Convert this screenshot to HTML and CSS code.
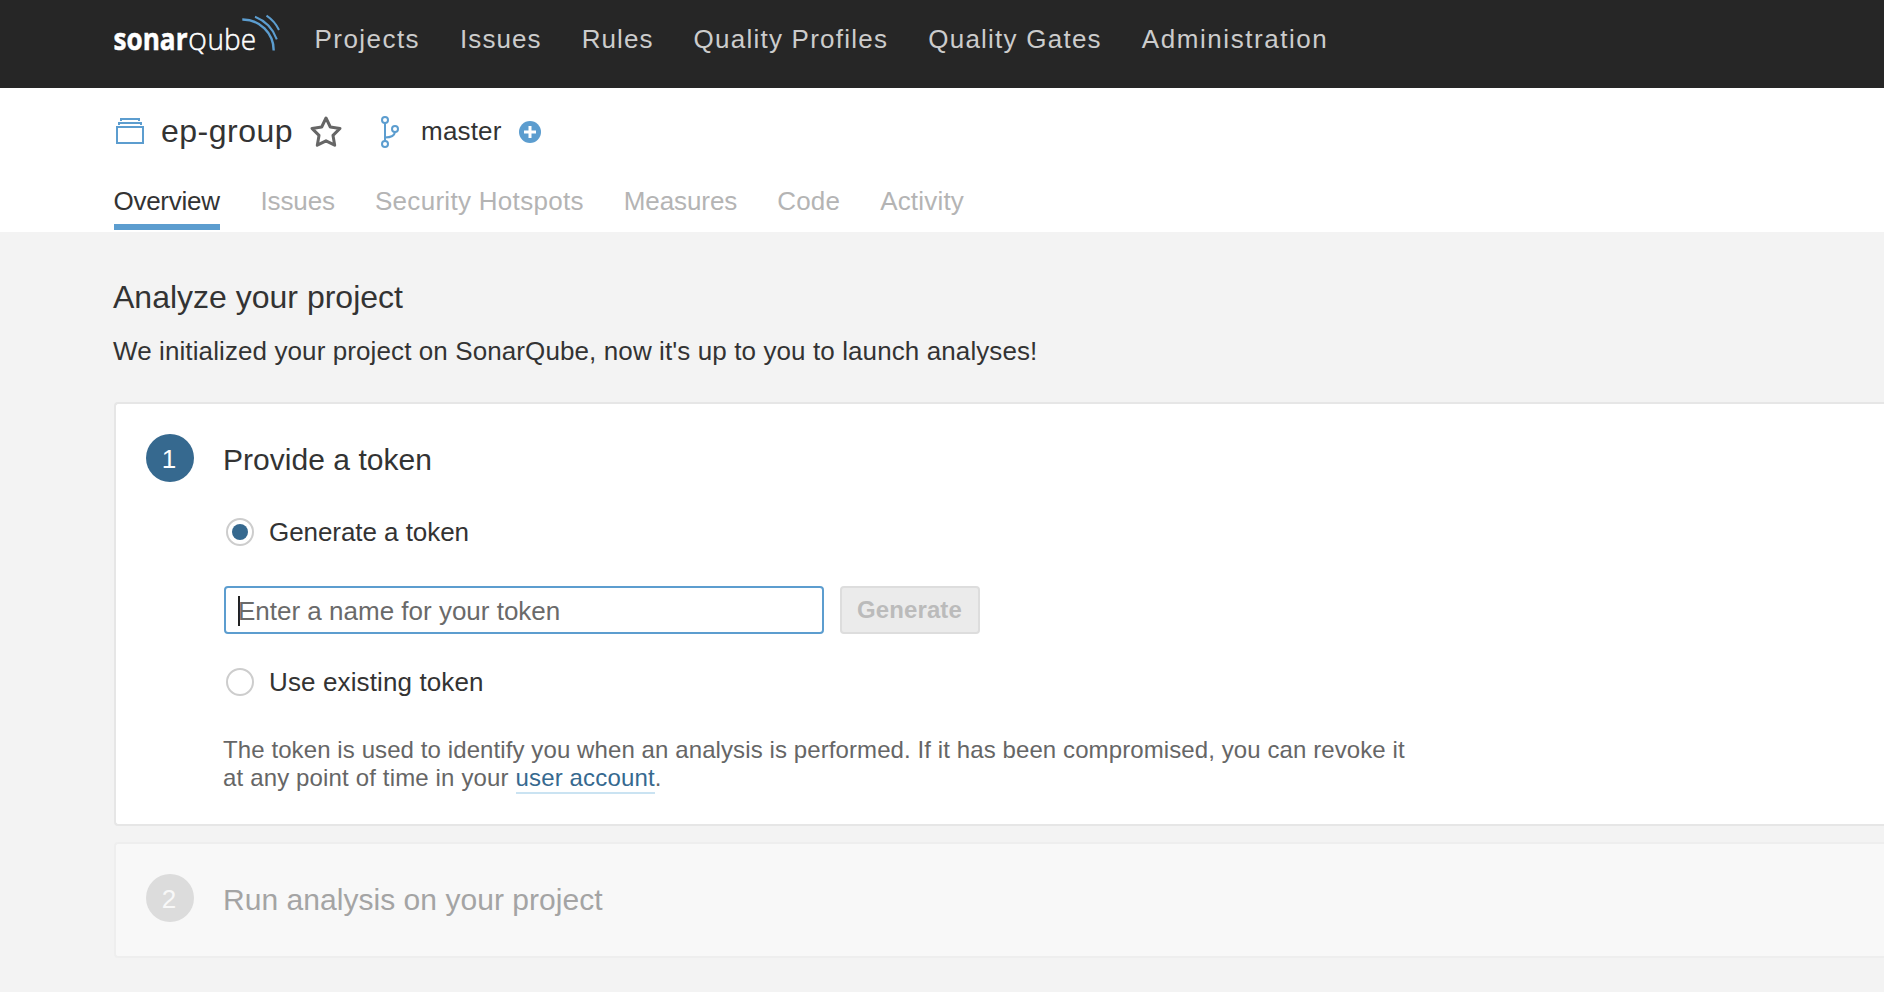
FILE: index.html
```
<!DOCTYPE html>
<html lang="en">
<head>
<meta charset="utf-8">
<title>ep-group</title>
<link rel="stylesheet" href="styles.css">
</head>
<body>
<header class="navbar">
  <a class="logo">
    <svg width="170" height="60" viewBox="0 0 170 60">
      <text class="logo-bold" x="-0.500" y="50" textLength="74" lengthAdjust="spacingAndGlyphs">sonar</text>
      <text class="logo-q" x="74.500" y="50" textLength="18" lengthAdjust="spacingAndGlyphs">Q</text>
      <text class="logo-light" x="93.500" y="50" textLength="48.500" lengthAdjust="spacingAndGlyphs">ube</text>
      <g class="logo-waves">
        <path class="wave-large" d="M128.300 19.500A31 31 0 0 1 159.700 50.500"/>
        <path d="M141 16.700A38 38 0 0 1 162.800 39.300"/>
        <path d="M152.500 15.700A36 36 0 0 1 165 30"/>
      </g>
    </svg>
  </a>
  <nav class="nav-items">
    <a class="projects">Projects</a><a class="short">Issues</a><a class="short">Rules</a><a>Quality Profiles</a><a>Quality Gates</a><a class="admin">Administration</a>
  </nav>
</header>
<section class="context">
  <div class="crumbs">
    <svg class="project-icon" width="28" height="26" viewBox="0 0 28 26"><path d="M1 9h26v16H1zM3 7V5h22v2M5 3V1h18v2"/></svg>
    <span class="project-name">ep-group</span>
    <svg class="star" width="34" height="34" viewBox="0 0 34 34"><path d="M17 3l4.300 9 9.700 1.400-7 7 1.700 9.800L17 25.800l-8.700 4.400L10 20.400l-7-7 9.700-1.400z"/></svg>
    <svg class="branch-icon" width="20" height="32" viewBox="0 0 20 32"><circle cx="5" cy="4" r="3"/><circle cx="5" cy="28" r="3"/><circle cx="15" cy="13" r="3"/><path d="M5 7v18M5 21.500c6 0 9.500-2 10-5.500"/></svg>
    <span class="branch-name">master</span>
    <svg class="plus" width="22" height="22" viewBox="0 0 22 22"><circle cx="11" cy="11" r="11"/><path d="M11 5v12M5 11h12"/></svg>
  </div>
  <nav class="tabs">
    <a class="tab active">Overview</a><a class="tab issues">Issues</a><a class="tab hotspots">Security Hotspots</a><a class="tab measures">Measures</a><a class="tab code">Code</a><a class="tab activity">Activity</a>
  </nav>
</section>
<main class="page">
  <h1 class="title">Analyze your project</h1>
  <p class="intro">We initialized your project on SonarQube, now it's up to you to launch analyses!</p>
  <section class="card">
    <div class="step">1</div>
    <div class="body">
      <h2 class="step-title">Provide a token</h2>
      <div class="option first"><i class="radio checked"></i><span class="label-generate">Generate a token</span></div>
      <div class="form">
        <div class="field"><i class="caret"></i><span>Enter a name for your token</span></div>
        <div class="button">Generate</div>
      </div>
      <div class="option"><i class="radio"></i><span class="label-existing">Use existing token</span></div>
      <p class="note">The token is used to identify you when an analysis is performed. If it has been compromised, you can revoke it<br><span class="note-end">at any point of time in your <a class="link">user account</a>.</span></p>
    </div>
  </section>
  <section class="card pending">
    <div class="step">2</div>
    <div class="body"><h2 class="step-title">Run analysis on your project</h2></div>
  </section>
</main>
</body>
</html>
```
FILE: styles.css
```
* { box-sizing: border-box; }
body {
  margin: 0;
  height: 992px;
  overflow: hidden;
  background: #f3f3f3;
  color: #333;
  font: 26px/32px "Liberation Sans", Arial, sans-serif;
}
h1, h2, p { margin: 0; font-weight: 400; }
svg { display: block; flex: none; fill: none; }

.navbar { display: flex; height: 88px; padding-left: 114px; background: #262626; }
.logo { width: 200.5px; }
.logo text { font-family: "Open Sans", "Noto Sans", sans-serif; font-size: 30px; fill: #fff; }
.logo .logo-bold { font-weight: 700; stroke: #fff; stroke-width: .5; }
.logo .logo-light { font-weight: 300; stroke: #fff; stroke-width: .5; }
.logo .logo-q { font-weight: 300; font-size: 23px; stroke: #fff; stroke-width: .7; }
.logo-waves { stroke: #5c9dcf; stroke-width: 2; }
.wave-large { stroke-width: 2.4; }
.nav-items { display: flex; gap: 40px; padding-top: 23px; color: #ccc; letter-spacing: 1.24px; white-space: nowrap; }
.projects { letter-spacing: 1.45px; }
.short { letter-spacing: 1.08px; }
.admin { letter-spacing: 1.55px; }

.context { height: 144px; padding-left: 114px; background: #fff; }
.crumbs { display: flex; height: 88px; align-items: flex-start; }
.project-icon { margin: 30px 0 0 2px; stroke: #5c9dcf; stroke-width: 2; }
.project-name { margin: 23px 0 0 17px; font-size: 32px; line-height: 40px; letter-spacing: .5px; }
.star { margin: 27px 0 0 16px; stroke: #666; stroke-width: 3; stroke-linejoin: round; }
.branch-icon { margin: 28px 0 0 37px; stroke: #5c9dcf; stroke-width: 2; }
.branch-name { margin: 27px 0 0 21px; letter-spacing: .15px; }
.plus { margin: 33px 0 0 17.7px; fill: #5c9dcf; }
.plus path { stroke: #fff; stroke-width: 3; }
.tabs { display: flex; gap: 40px; padding-top: 9px; white-space: nowrap; }
.tab { height: 45px; color: #b4b4b4; }
.tab.active { width: 106.4px; color: #333; border-bottom: 6px solid #5c9dcf; letter-spacing: -.25px; text-indent: -.6px; }
.issues { letter-spacing: -.1px; }
.hotspots { letter-spacing: .3px; }
.measures { letter-spacing: -.1px; }
.code { letter-spacing: .2px; }
.activity { letter-spacing: .2px; }

.page { padding: 45px 0 0 114px; white-space: nowrap; }
.title { margin-left: -1px; font-size: 32px; line-height: 40px; }
.intro { margin: 18px 0 0 -1px; letter-spacing: .1px; }
.card { display: flex; height: 424px; margin-top: 35px; padding: 30px 0 30px 30px; border: 2px solid #e6e6e6; border-right: 0; border-radius: 4px 0 0 4px; background: #fff; }
.step { flex: none; width: 48px; height: 48px; padding-right: 2px; border-radius: 50%; background: #36698f; color: #fff; line-height: 50px; text-align: center; }
.body { padding-left: 30px; }
.step-title { margin: 8px 0 0 -1px; font-size: 30px; line-height: 36px; letter-spacing: .04px; }
.option { display: flex; align-items: center; height: 28px; }
.option.first { margin-top: 40px; }
.label-generate { letter-spacing: -.06px; }
.label-existing { letter-spacing: .12px; }
.radio { display: flex; width: 28px; height: 28px; margin: 0 15px 0 2px; border: 2px solid #cdcdcd; border-radius: 50%; }
.radio.checked::after { content: ""; width: 16px; height: 16px; margin: 4px; border-radius: 50%; background: #36698f; }
.form { display: flex; gap: 16px; margin: 40px 0 34px; }
.field { display: flex; align-items: center; width: 600px; height: 48px; padding: 2px 0 0 12px; border: 2px solid #5c9dcf; border-radius: 4px; color: #6a6a6a; }
.caret { width: 2px; height: 30px; margin-right: -2px; background: #222; }
.button { width: 140px; height: 48px; padding-right: 1px; border: 2px solid #ddd; border-radius: 4px; background: #ebebeb; color: #bbb; font-size: 24px; font-weight: 700; line-height: 44px; letter-spacing: .1px; text-align: center; }
.note { margin: 40px 0 0 -1px; color: #666; font-size: 24px; line-height: 28px; letter-spacing: .095px; }
.note-end { letter-spacing: .15px; }
.link { padding-bottom: 1px; color: #36698f; border-bottom: 2px solid #cae3f2; }
.pending { height: 116px; margin-top: 16px; background: #f8f8f8; border-color: #eee; }
.pending .step { background: #dcdcdc; color: #f8f8f8; }
.pending .step-title { color: #a4a4a4; }
```
